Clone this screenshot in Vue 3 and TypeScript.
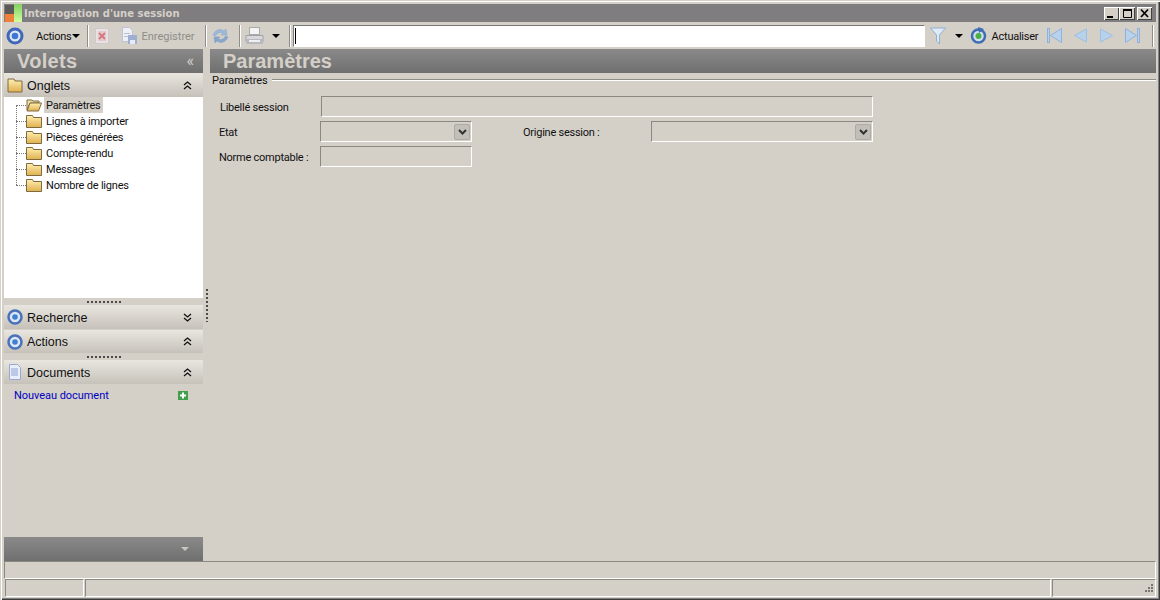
<script setup lang="ts">
const tabs: string[] = ['Lignes à importer', 'Pièces générées', 'Compte-rendu', 'Messages', 'Nombre de lignes']
</script>

<template>
  <div class="window">
    <div class="titlebar">
      <svg class="logo" width="17" height="18" viewBox="0 0 17 18">
        <defs>
          <linearGradient id="lg" x1="0" y1="0" x2="0" y2="1"><stop offset="0" stop-color="#80d060" /><stop offset="1" stop-color="#d0ffa0" /></linearGradient>
        </defs>
        <rect x="0" y="1" width="9" height="9" fill="#5c5a58" />
        <rect x="0" y="10" width="9" height="8" fill="#f08038" />
        <rect x="9" y="0" width="8" height="18" fill="url(#lg)" />
      </svg>
      <span class="title">Interrogation d'une session</span>
      <div class="winbtns">
        <span class="winbtn"><svg width="13" height="11" viewBox="0 0 13 11"><rect x="2" y="8" width="6" height="2" fill="#000" /></svg></span>
        <span class="winbtn wide"><svg width="13" height="11" viewBox="0 0 13 11"><path d="M2.500 1.500h8v8h-8z" fill="none" stroke="#000" /><rect x="2" y="1" width="9" height="2" fill="#000" /></svg></span>
        <span class="winbtn close"><svg width="13" height="11" viewBox="0 0 13 11"><path d="M3 1.500l7 7.500M10 1.500L3 9" stroke="#000" stroke-width="1.800" /></svg></span>
      </div>
    </div>

    <div class="toolbar">
      <svg class="ml2" width="18" height="18" viewBox="0 0 18 18">
        <circle cx="9" cy="9" r="7" fill="#dce6f6" stroke="#3f68b8" stroke-width="3" />
        <circle cx="9" cy="9" r="3.300" fill="#3f78d0" />
      </svg>
      <span class="tb-text tight ml12">Actions</span>
      <span class="caret ml1"></span>
      <span class="sep ml7"></span>
      <svg class="ml6" width="14" height="16" viewBox="0 0 14 16">
        <rect x="0.500" y="0.500" width="13" height="15" fill="#e9e2e2" stroke="#cfc8cc" />
        <rect x="3" y="3" width="8" height="10" fill="#e8c8cc" />
        <path d="M4 5l6 6M10 5l-6 6" stroke="#d07a80" stroke-width="1.800" />
      </svg>
      <svg class="ml12" width="17" height="17" viewBox="0 0 17 17">
        <path d="M1.500 .500h7l3 3v11h-10z" fill="#eef0f6" stroke="#bcc2d4" />
        <rect x="3" y="6" width="6" height="1" fill="#b8c0d8" />
        <rect x="3" y="9" width="6" height="1" fill="#b8c0d8" />
        <rect x="7" y="8" width="9" height="9" fill="#a0aed2" />
        <rect x="9" y="13" width="5" height="4" fill="#e8ebf3" />
      </svg>
      <span class="tb-text muted ml3">Enregistrer</span>
      <span class="sep ml10"></span>
      <svg class="ml5" width="17" height="18" viewBox="0 0 17 18">
        <path d="M1 8C3 3 8 1 12 4l2-2 1 6H9l2-2C8 4.500 5 6 3.500 9z" fill="#9cb8d8" stroke="#86a6cc" stroke-width=".5" />
        <path d="M16 10c-2 5-7 7-11 4l-2 2-1-6h6l-2 2c3 1.500 6 0 7.500-3z" fill="#86a6cc" stroke="#7a9ac2" stroke-width=".5" />
      </svg>
      <span class="sep ml10"></span>
      <svg class="ml4" width="19" height="18" viewBox="0 0 19 18">
        <rect x="4.500" y="0.500" width="10" height="7" fill="#f4f4f4" stroke="#aaa" />
        <path d="M1 8.500h17v6H1z" fill="#d8d8dc" stroke="#a0a0a8" />
        <rect x="1" y="12" width="17" height="5" rx="1" fill="#b8b8c0" />
        <rect x="4" y="13" width="11" height="2" fill="#f0f0f0" />
      </svg>
      <span class="tri ml8"></span>
      <span class="sep ml9"></span>
      <div class="searchbox"><span class="cursor"></span></div>
      <svg class="ml5" width="16" height="18" viewBox="0 0 16 18">
        <path d="M.5 1h15L9.500 8v9l-3-3V8z" fill="#dfeaf4" stroke="#8eb0d4" />
      </svg>
      <span class="tri ml9"></span>
      <svg class="ml7" width="17" height="17" viewBox="0 0 17 17">
        <circle cx="8.500" cy="9" r="6.500" fill="#cfe0ea" stroke="#3f6cb4" stroke-width="2.500" />
        <circle cx="8.500" cy="9" r="3" fill="#4cb044" />
        <path d="M8 0l6 2-5 4z" fill="#3f6cb4" />
      </svg>
      <span class="tb-text tight ml5">Actualiser</span>
      <svg class="ml9" width="15" height="15" viewBox="0 0 15 15">
        <rect x="0.500" y="0.500" width="2" height="14" fill="#b8d2ee" stroke="#8db3dc" />
        <path d="M14.500 .500v14L3.500 7.500z" fill="#b8d2ee" stroke="#8db3dc" />
      </svg>
      <svg class="ml12" width="13" height="15" viewBox="0 0 13 15"><path d="M12.500 1v13L.5 7.500z" fill="#b8d2ee" stroke="#9cbfe2" /></svg>
      <svg class="ml13" width="13" height="15" viewBox="0 0 13 15"><path d="M.5 1v13l12-6.500z" fill="#b8d2ee" stroke="#9cbfe2" /></svg>
      <svg class="ml12" width="15" height="15" viewBox="0 0 15 15">
        <path d="M.5 .500v14l11-7z" fill="#b8d2ee" stroke="#8db3dc" />
        <rect x="12.500" y="0.500" width="2" height="14" fill="#b8d2ee" stroke="#8db3dc" />
      </svg>
      <span class="sep ml12"></span>
    </div>

    <div class="main">
      <aside class="sidebar">
        <div class="bar volets">
          <span class="bar-title">Volets</span>
          <span class="collapse">«</span>
        </div>

        <div class="section">
          <svg class="sec-icon" width="16" height="16" viewBox="0 0 16 16">
            <defs><linearGradient id="fg" x1="0" y1="0" x2="0" y2="1"><stop offset="0" stop-color="#fff0b0" /><stop offset="1" stop-color="#e0b050" /></linearGradient></defs>
            <path d="M1 2h6l1 2h7v11H1z" fill="url(#fg)" stroke="#806a40" />
          </svg>
          <span class="sec-text">Onglets</span>
          <svg class="chev" width="9" height="9" viewBox="0 0 9 9"><path d="M1 4l3.500-3L8 4M1 8l3.500-3L8 8" fill="none" stroke="#111" stroke-width="1.300" /></svg>
        </div>
        <div class="tree">
          <div class="row">
            <span class="branch"></span>
            <svg width="16" height="14" viewBox="0 0 16 14">
              <path d="M1 2h5l1 1h6v2H4L1 12z" fill="#efe0a8" stroke="#806a40" />
              <path d="M4 5h11.500L12.500 13H1z" fill="url(#fg)" stroke="#806a40" />
            </svg>
            <span class="label selected">Paramètres</span>
          </div>
          <div v-for="t in tabs" :key="t" class="row">
            <span class="branch"></span>
            <svg width="16" height="14" viewBox="0 0 16 14">
              <path d="M.5 1.500h6l1 2h8v10H.5z" fill="url(#fg)" stroke="#806a40" />
            </svg>
            <span class="label">{{ t }}</span>
          </div>
        </div>

        <div class="grip"><span class="dots"></span></div>
        <div class="section">
          <svg class="sec-icon" width="16" height="16" viewBox="0 0 16 16">
            <circle cx="8" cy="8" r="6.500" fill="#dce6f6" stroke="#4a72b8" stroke-width="2.500" />
            <circle cx="8" cy="8" r="2.800" fill="#4080d0" />
          </svg>
          <span class="sec-text">Recherche</span>
          <svg class="chev" width="9" height="9" viewBox="0 0 9 9"><path d="M1 1l3.500 3L8 1M1 5l3.500 3L8 5" fill="none" stroke="#111" stroke-width="1.300" /></svg>
        </div>
        <div class="section gap1">
          <svg class="sec-icon" width="16" height="16" viewBox="0 0 16 16">
            <circle cx="8" cy="8" r="6.500" fill="#dce6f6" stroke="#4a72b8" stroke-width="2.500" />
            <circle cx="8" cy="8" r="2.800" fill="#4080d0" />
          </svg>
          <span class="sec-text">Actions</span>
          <svg class="chev" width="9" height="9" viewBox="0 0 9 9"><path d="M1 4l3.500-3L8 4M1 8l3.500-3L8 8" fill="none" stroke="#111" stroke-width="1.300" /></svg>
        </div>
        <div class="grip"><span class="dots"></span></div>
        <div class="section">
          <svg class="sec-icon" width="16" height="16" viewBox="0 0 16 16">
            <path d="M2.500 .500h8l3 3v12h-11z" fill="#e8eefa" stroke="#98a8cc" />
            <path d="M4 5h7M4 7h7M4 9h7M4 11h7" stroke="#8ea4d4" />
          </svg>
          <span class="sec-text">Documents</span>
          <svg class="chev" width="9" height="9" viewBox="0 0 9 9"><path d="M1 4l3.500-3L8 4M1 8l3.500-3L8 8" fill="none" stroke="#111" stroke-width="1.300" /></svg>
        </div>
        <div class="newdoc">
          <span class="link">Nouveau document</span>
          <svg width="10" height="9" viewBox="0 0 10 9">
            <rect width="10" height="9" fill="#3f9f4a" />
            <path d="M5 1.500v6M2 4.500h6" stroke="#fff" stroke-width="2" />
          </svg>
        </div>
        <div class="spacer"></div>
        <div class="bar foot"><span class="foot-tri"></span></div>
      </aside>

      <div class="vsplit"><span class="vdots"></span></div>

      <section class="content">
        <div class="bar params"><span class="bar-title">Paramètres</span></div>
        <div class="legend"><span>Paramètres</span><i></i></div>
        <div class="form">
          <div class="f-row r1">
            <span class="f-label w1">Libellé session</span>
            <div class="input long"></div>
          </div>
          <div class="f-row r2">
            <span class="f-label w2">Etat</span>
            <div class="input short combo"><span class="dd"><svg width="9" height="6" viewBox="0 0 9 6"><path d="M1 1l3.500 3.500L8 1" fill="none" stroke="#333" stroke-width="2" /></svg></span></div>
            <span class="f-label w3">Origine session :</span>
            <div class="input mid combo"><span class="dd"><svg width="9" height="6" viewBox="0 0 9 6"><path d="M1 1l3.500 3.500L8 1" fill="none" stroke="#333" stroke-width="2" /></svg></span></div>
          </div>
          <div class="f-row r3">
            <span class="f-label w2">Norme comptable :</span>
            <div class="input short"></div>
          </div>
        </div>
      </section>
    </div>

    <div class="strip"></div>
    <div class="statusbar">
      <div class="panel p1"></div>
      <div class="panel p2"></div>
      <div class="panel p3">
        <svg width="12" height="12" viewBox="0 0 12 12" fill="#77756f">
          <rect x="9" y="1" width="2" height="2" /><rect x="6" y="4" width="2" height="2" /><rect x="9" y="4" width="2" height="2" />
          <rect x="3" y="7" width="2" height="2" /><rect x="6" y="7" width="2" height="2" /><rect x="9" y="7" width="2" height="2" />
        </svg>
      </div>
    </div>
  </div>
</template>

<style>
html, body { margin: 0; padding: 0; overflow: hidden; }
</style>

<style scoped>
.window {
  width: 1160px;
  height: 600px;
  box-sizing: border-box;
  padding: 4px 4px 3px;
  background: #d4d0c8;
  display: flex;
  flex-direction: column;
  font-family: Roboto, "Liberation Sans", sans-serif;
  font-size: 11px;
  color: #111;
  box-shadow: inset 1px 1px 0 #d4d0c8, inset 2px 2px 0 #fff, inset -1px -1px 0 #3c3c3c, inset -2px -2px 0 #808080;
}
.titlebar {
  height: 18px;
  flex: none;
  background: #807d80;
  display: flex;
  align-items: center;
}
.logo { margin-left: 1px; flex: none; }
.title {
  margin-left: 2px;
  font-family: "DejaVu Sans", sans-serif;
  font-weight: bold;
  font-size: 10px;
  color: #d4d0c8;
}
.winbtns { margin-left: auto; display: flex; margin-right: 4px; }
.winbtn {
  width: 15px;
  height: 13px;
  background: #d4d0c8;
  box-shadow: inset 1px 1px 0 #fff, inset -1px -1px 0 #404040;
  display: flex;
  align-items: center;
  justify-content: center;
}
.wide { width: 16px; }
.close { margin-left: 2px; }
.toolbar {
  height: 27px;
  flex: none;
  display: flex;
  align-items: center;
}
.toolbar > svg { flex: none; }
.ml1 { margin-left: 1px; } .ml2 { margin-left: 2px; } .ml3 { margin-left: 3px; } .ml4 { margin-left: 4px; } .ml5 { margin-left: 5px; } .ml6 { margin-left: 6px; }
.ml7 { margin-left: 7px; } .ml8 { margin-left: 8px; } .ml9 { margin-left: 9px; } .ml10 { margin-left: 10px; }
.ml12 { margin-left: 12px; } .ml13 { margin-left: 13px; }
.tb-text { white-space: nowrap; padding-top: 1px; }
.tight { letter-spacing: -0.25px; }
.muted { color: #8f8d88; }
.caret, .tri { width: 0; height: 0; border-left: 4px solid transparent; border-right: 4px solid transparent; border-top: 4px solid #000; flex: none; }
.sep { width: 1px; height: 22px; background: #8f8d88; border-right: 1px solid #fff; flex: none; }
.searchbox {
  margin-left: 2px;
  width: 632px;
  height: 22px;
  flex: none;
  box-sizing: border-box;
  background: #fff;
  border: 1px solid;
  border-color: #777 #fff #fff #777;
  display: flex;
  align-items: center;
  padding-left: 1px;
}
.cursor { width: 1px; height: 16px; background: #000; }
.main { flex: 1; display: flex; min-height: 0; }
.sidebar { width: 199px; flex: none; display: flex; flex-direction: column; }
.bar {
  height: 24px;
  flex: none;
  background: linear-gradient(#8a8a8a, #6f6f6f);
  display: flex;
  align-items: center;
}
.bar-title {
  font-family: "Liberation Sans", sans-serif;
  font-weight: bold;
  font-size: 20px;
  color: #d4d0c8;
}
.volets .bar-title { margin-left: 13px; letter-spacing: 0.3px; }
.collapse { margin-left: auto; margin-right: 9px; color: #d4d0c8; font-size: 16px; line-height: 20px; }
.section {
  height: 24px;
  flex: none;
  display: flex;
  align-items: center;
  background: linear-gradient(#e9e6e0, #c6c2ba);
  font-size: 12.500px;
}
.sec-text { padding-top: 2px; font-family: "Liberation Sans", sans-serif; }
.gap1 { margin-top: 1px; height: 23px; }
.gap1 .sec-text { padding-top: 0; }
.sec-icon { margin-left: 3px; margin-right: 4px; flex: none; }
.chev { margin-left: auto; margin-right: 11px; }
.tree {
  height: 201px;
  flex: none;
  background: #fff;
  position: relative;
}
.tree::before {
  content: "";
  position: absolute;
  left: 12px;
  top: 8px;
  height: 80px;
  border-left: 1px dotted #777;
}
.row { height: 16px; display: flex; align-items: center; }
.branch { width: 10px; margin-left: 12px; border-top: 1px dotted #777; flex: none; }
.row svg { flex: none; }
.label { margin-left: 2px; padding: 1px 2px 0; line-height: 15px; white-space: nowrap; letter-spacing: -0.2px; }
.selected { background: #d4d0c8; }
.grip { height: 7px; flex: none; display: flex; justify-content: center; align-items: center; }
.dots { width: 34px; height: 2px; margin-left: 1px; background: repeating-linear-gradient(90deg, #4a4a4a 0 2px, #d4d0c8 2px 4px); }
.newdoc {
  height: 22px;
  flex: none;
  display: flex;
  align-items: center;
  padding-left: 10px;
  padding-right: 15px;
  justify-content: space-between;
}
.link { color: #0000c0; letter-spacing: -0.05px; }
.spacer { flex: 1; }
.foot { justify-content: flex-end; padding-right: 14px; box-sizing: border-box; }
.foot-tri { width: 0; height: 0; border-left: 4px solid transparent; border-right: 4px solid transparent; border-top: 4px solid #c8c6c0; }
.vsplit { width: 7px; flex: none; display: flex; flex-direction: column; align-items: center; }
.vdots { margin-top: 240px; width: 2px; height: 33px; background: repeating-linear-gradient(#4a4a4a 0 2px, #d4d0c8 2px 4px); }
.content { flex: 1; min-width: 0; }
.params .bar-title { margin-left: 13px; }
.legend { display: flex; align-items: center; height: 14px; margin-left: 2px; letter-spacing: -0.1px; }
.legend i { flex: 1; height: 1px; margin-left: 4px; background: #8f8d88; border-bottom: 1px solid #fff; }
.form { padding-left: 9px; }
.f-row { display: flex; align-items: center; }
.r1 { margin-top: 9px; height: 21px; }
.r2 { margin-top: 4px; height: 21px; }
.r3 { margin-top: 4px; height: 21px; }
.f-label { white-space: nowrap; flex: none; letter-spacing: -0.25px; padding-top: 2px; }
.w1 { width: 101px; margin-left: 1px; }
.w2 { width: 101px; }
.w3 { width: 128px; margin-left: 51px; }
.input {
  box-sizing: border-box;
  height: 100%;
  background: #d4d0c8;
  border: 1px solid;
  border-color: #8a8880 #fff #fff #8a8880;
  flex: none;
  display: flex;
  align-items: center;
  justify-content: flex-end;
}
.long { width: 552px; }
.short { width: 152px; }
.mid { width: 222px; }
.dd {
  width: 16px;
  height: 16px;
  background: #c2bfb8;
  border: 1px solid #aeaba4;
  box-sizing: border-box;
  border-radius: 2px;
  display: flex;
  align-items: center;
  justify-content: center;
  margin-right: 1px;
}
.strip {
  height: 16px;
  flex: none;
  background: #d4d0c8;
  border-top: 1px solid #8a8880;
  border-left: 1px solid #8a8880;
  border-right: 1px solid #fff;
  border-bottom: 1px solid #fff;
}
.statusbar { height: 18px; flex: none; display: flex; gap: 1px; margin-left: 1px; }
.panel {
  box-sizing: border-box;
  height: 100%;
  border: 1px solid;
  border-color: #8a8880 #fff #fff #8a8880;
}
.p1 { width: 79px; }
.p2 { flex: 1; }
.p3 { width: 104px; display: flex; align-items: flex-end; justify-content: flex-end; padding: 0 1px 1px 0; }
</style>
